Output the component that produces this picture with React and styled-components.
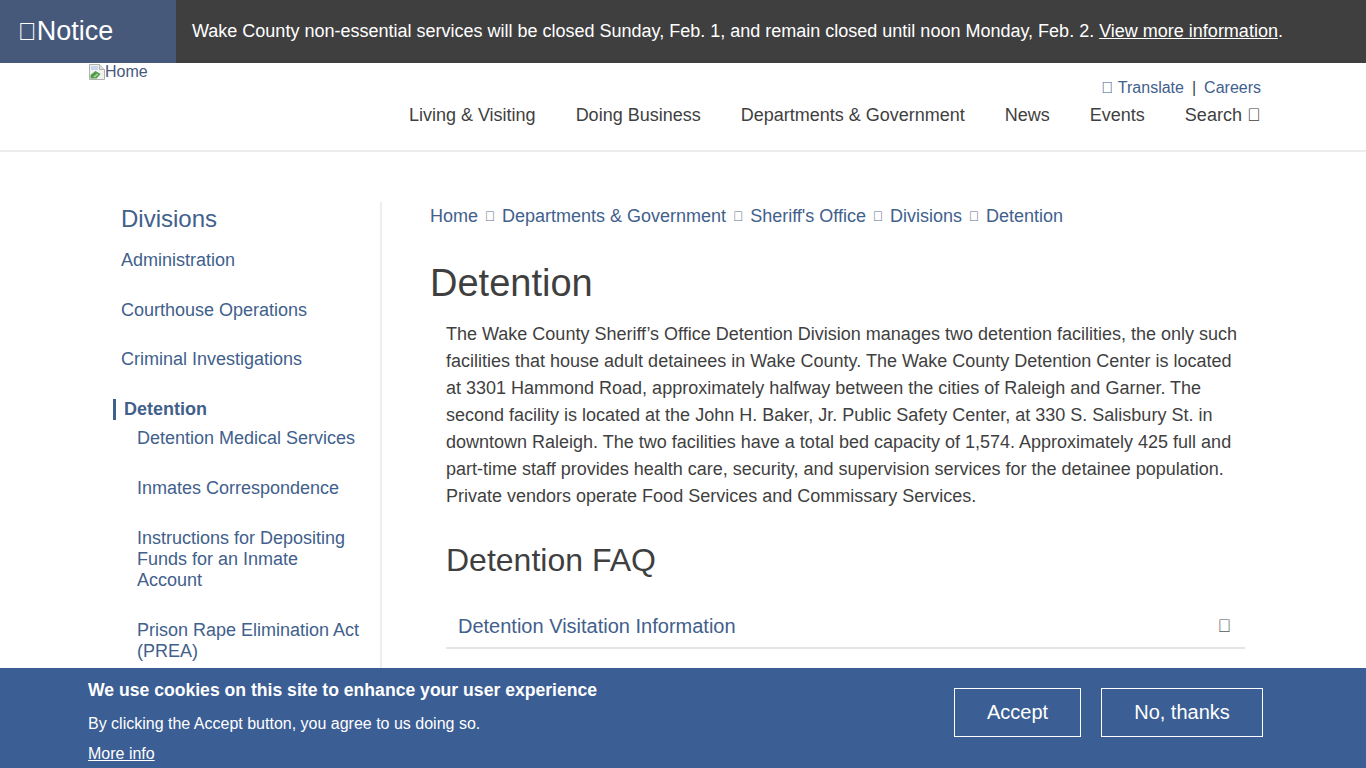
import React from 'react';
import styled, { createGlobalStyle } from 'styled-components';

const Global = createGlobalStyle`
  html, body { margin: 0; padding: 0; height: 100%; overflow: hidden; background: #fff; }
  body { font-family: "Liberation Sans", Arial, sans-serif; color: #3f3f3f; font-size: 18px; }
  a { color: inherit; text-decoration: none; }
`;

const Tofu = styled.span`
  font-family: "Liberation Sans", sans-serif;
  font-size: ${p => p.$size || 'inherit'};
  color: ${p => p.$color || 'inherit'};
`;

const NoticeBar = styled.div`
  display: flex; height: 63px; background: #3f3f3f; color: #fff;
`;
const NoticeLabel = styled.div`
  width: 176px; box-sizing: border-box; padding: 0 0 1px 18px; background: #47597a;
  display: flex; align-items: center; font-size: 27px; line-height: 1;
`;
const NoticeText = styled.div`
  padding-left: 16px; display: flex; align-items: center; font-size: 18px; white-space: pre;
  a { text-decoration: underline; }
`;

const Header = styled.header`
  height: 87px; border-bottom: 2px solid #ececec; box-sizing: content-box;
  display: flex; justify-content: space-between; padding: 0 105px 0 89px;
`;
const Logo = styled.a`
  display: flex; align-items: flex-start; font-size: 16px; line-height: 18px; color: #47597a;
  svg { flex: none; margin-top: 1px; }
`;
const HeaderRight = styled.div`
  display: flex; flex-direction: column; align-items: flex-end; padding-top: 16px;
`;
const Utility = styled.div`
  display: flex; gap: 8px; font-size: 16px; line-height: 18px; color: #41608c;
  span.sep { color: #3f3f3f; }
`;
const Nav = styled.nav`
  display: flex; gap: 40px; margin-top: 8px; padding-right: 0.6px; font-size: 18px; line-height: 21px; color: #3f3f3f;
`;

const Body = styled.div`
  display: flex; padding: 50px 0 0 113px;
`;
const Sidebar = styled.aside`
  width: 267px; height: 560px; border-right: 2px solid #eeeeee; flex: none;
  padding-top: 5px; box-sizing: content-box;
`;
const SideTitle = styled.h2`
  margin: 0 0 19px 8px; font-size: 24px; font-weight: 400; line-height: 24px; color: #41608c;
`;
const SideList = styled.ul`
  list-style: none; margin: 0; padding: 0 0 0 ${p => p.$nested ? '16px' : '8px'};
  width: ${p => p.$nested ? '228px' : 'auto'}; color: #41608c; font-size: 18px; line-height: 21px;
`;
const SideItem = styled.li`
  margin-bottom: ${p => p.$gap || 29}px;
  &:last-child { margin-bottom: 0; }
`;
const ActiveItem = styled.div`
  margin-left: -8px; margin-bottom: 8px; padding-left: 8px; border-left: 3px solid #41608c;
  font-weight: 700; line-height: 21px;
`;

const Main = styled.main`
  margin-left: 48px; width: 815px; flex: none;
`;
const Crumbs = styled.div`
  display: flex; gap: 6.75px; color: #41608c; font-size: 18px; line-height: 21px; margin-top: 4px;
`;
const Sep = styled.span`
  color: #5f6f88; font-size: 14px; display: inline-flex; align-items: center;
`;
const Title = styled.h1`
  margin: 34px 0 16px; font-size: 38px; font-weight: 400; line-height: 44px; color: #3f3f3f;
`;
const Content = styled.div`
  padding-left: 16px; width: 815px; box-sizing: border-box;
`;
const Para = styled.p`
  margin: 0; font-size: 18px; line-height: 27px; color: #3f3f3f; white-space: nowrap;
`;
const H2 = styled.h2`
  margin: 32px 0 28px; font-size: 32px; font-weight: 400; line-height: 37px; color: #3f3f3f;
`;
const Accordion = styled.div`
  display: flex; justify-content: space-between; align-items: center; padding: 0 14px 1px 12px;
  height: 42px; border-bottom: 2px solid #e4e4e4; font-size: 20px; color: #41608c; box-sizing: border-box;
`;

const Cookie = styled.div`
  position: fixed; left: 0; right: 0; bottom: 0; height: 100px; background: #3b5e94; color: #fff;
  display: flex; justify-content: space-between; box-sizing: border-box; padding: 0 103px 0 88px;
`;
const CookieText = styled.div`
  padding-top: 12px;
`;
const CookieTitle = styled.div`
  font-size: 17.6px; font-weight: 700; line-height: 21px;
`;
const CookieLine = styled.p`
  margin: 14px 0 0; font-size: 16px; line-height: 18px;
`;
const CookieLink = styled.a`
  display: block; margin-top: 12px; font-size: 16px; line-height: 18px; text-decoration: underline;
`;
const Buttons = styled.div`
  display: flex; gap: 20px; padding-top: 20px; align-items: flex-start;
`;
const Btn = styled.button`
  height: 49px; width: ${p => p.$w}px; background: transparent; border: 1px solid #fff; color: #fff;
  font: 400 20px "Liberation Sans", Arial, sans-serif; padding: 0;
`;

const BrokenImg = () => (
  <svg width="16" height="16" viewBox="0 0 16 16" aria-hidden="true">
    <path d="M.5.5h10l5 5v10H.5z" fill="#f2f2f2" stroke="#b0b0b0" />
    <path d="M10.5.5v5h5" fill="#dcdcdc" stroke="#b0b0b0" />
    <path d="M2 2h7v4H2z" fill="#c8d6ea" />
    <path d="M1.5 14.5V11l5-4 5 3-4 4.5z" fill="#4e9a47" />
    <path d="M4 13l4-3.5 1.5 1L6 13.5z" fill="#a6d69a" />
  </svg>
);

const T = '\uf0ac';

export default function App() {
  return (
    <>
      <Global />
      <NoticeBar>
        <NoticeLabel><Tofu $size="25px">{'\uf071'}</Tofu>Notice</NoticeLabel>
        <NoticeText>Wake County non-essential services will be closed Sunday, Feb. 1, and remain closed until noon Monday, Feb. 2. <a href="#">View more information</a>.</NoticeText>
      </NoticeBar>
      <Header>
        <Logo href="#"><BrokenImg />Home</Logo>
        <HeaderRight>
          <Utility>
            <a href="#"><Tofu $color="#41608c">{T}</Tofu> Translate</a>
            <span className="sep">|</span>
            <a href="#">Careers</a>
          </Utility>
          <Nav>
            <a href="#">Living &amp; Visiting</a>
            <a href="#">Doing Business</a>
            <a href="#">Departments &amp; Government</a>
            <a href="#">News</a>
            <a href="#">Events</a>
            <a href="#">Search <Tofu>{'\uf002'}</Tofu></a>
          </Nav>
        </HeaderRight>
      </Header>
      <Body>
        <Sidebar>
          <SideTitle>Divisions</SideTitle>
          <SideList>
            <SideItem>Administration</SideItem>
            <SideItem $gap={28}>Courthouse Operations</SideItem>
            <SideItem>Criminal Investigations</SideItem>
            <li>
              <ActiveItem>Detention</ActiveItem>
              <SideList $nested>
                <SideItem>Detention Medical Services</SideItem>
                <SideItem>Inmates Correspondence</SideItem>
                <SideItem>Instructions for Depositing Funds for an Inmate Account</SideItem>
                <SideItem>Prison Rape Elimination Act (PREA)</SideItem>
              </SideList>
            </li>
          </SideList>
        </Sidebar>
        <Main>
          <Crumbs>
            <a href="#">Home</a><Sep>{'\uf105'}</Sep>
            <a href="#">Departments &amp; Government</a><Sep>{'\uf105'}</Sep>
            <a href="#">Sheriff's Office</a><Sep>{'\uf105'}</Sep>
            <a href="#">Divisions</a><Sep>{'\uf105'}</Sep>
            <a href="#">Detention</a>
          </Crumbs>
          <Title>Detention</Title>
          <Content>
            <Para>
              The Wake County Sheriff’s Office Detention Division manages two detention facilities, the only such<br />
              facilities that house adult detainees in Wake County. The Wake County Detention Center is located<br />
              at 3301 Hammond Road, approximately halfway between the cities of Raleigh and Garner. The<br />
              second facility is located at the John H. Baker, Jr. Public Safety Center, at 330 S. Salisbury St. in<br />
              downtown Raleigh. The two facilities have a total bed capacity of 1,574. Approximately 425 full and<br />
              part-time staff provides health care, security, and supervision services for the detainee population.<br />
              Private vendors operate Food Services and Commissary Services.
            </Para>
            <H2>Detention FAQ</H2>
            <Accordion><span>Detention Visitation Information</span><Tofu $size="18px" $color="#555">{'\uf107'}</Tofu></Accordion>
          </Content>
        </Main>
      </Body>
      <Cookie>
        <CookieText>
          <CookieTitle>We use cookies on this site to enhance your user experience</CookieTitle>
          <CookieLine>By clicking the Accept button, you agree to us doing so.</CookieLine>
          <CookieLink href="#">More info</CookieLink>
        </CookieText>
        <Buttons>
          <Btn $w={127}>Accept</Btn>
          <Btn $w={162}>No, thanks</Btn>
        </Buttons>
      </Cookie>
    </>
  );
}
